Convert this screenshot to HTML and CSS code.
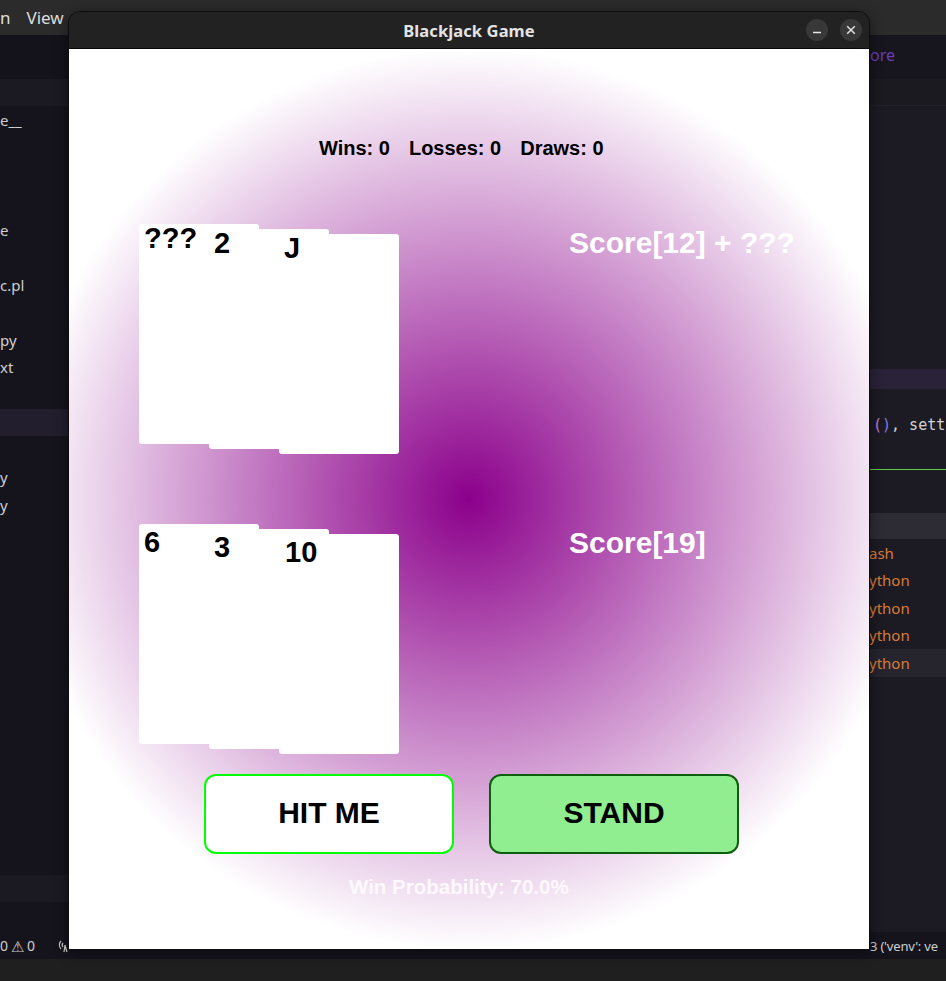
FILE: index.html
```html
<!DOCTYPE html>
<html lang="en">
<head>
<meta charset="utf-8">
<title>Blackjack Game</title>
<link rel="stylesheet" href="styles.css">
</head>
<body>
<div class="desktop">
  <div class="menubar">
    <span class="menu-item">n</span>
    <span class="menu-item">View</span>
    <span class="menu-item">Go</span>
    <span class="menu-item">Run</span>
    <span class="menu-item">Terminal</span>
    <span class="menu-item">Help</span>
  </div>

  <div class="workbench">
    <div class="sidebar">
      <div class="side-top"></div>
      <div class="side-head"></div>
      <div class="side-row">e__</div>
      <div class="side-row"></div>
      <div class="side-row"></div>
      <div class="side-row"></div>
      <div class="side-row">e</div>
      <div class="side-row"></div>
      <div class="side-row">c.pl</div>
      <div class="side-row"></div>
      <div class="side-row">py</div>
      <div class="side-row">xt</div>
      <div class="side-row"></div>
      <div class="side-row active"></div>
      <div class="side-row"></div>
      <div class="side-row">y</div>
      <div class="side-row">y</div>
      <div class="side-fill"></div>
      <div class="side-band"></div>
      <div class="side-bottom"></div>
    </div>
    <div class="editor"></div>
    <div class="panel">
      <div class="p-top"><span class="p-link">ore</span></div>
      <div class="p-head"></div>
      <div class="p-space1"></div>
      <div class="p-hl"></div>
      <div class="p-code"><span class="br1">(</span><span class="br2">)</span>, sett</div>
      <div class="p-line"></div>
      <div class="p-space2"></div>
      <div class="p-tabs"></div>
      <div class="p-term">ash</div>
      <div class="p-term">ython</div>
      <div class="p-term">ython</div>
      <div class="p-term">ython</div>
      <div class="p-term active">ython</div>
    </div>
  </div>

  <div class="statusbar">
    <div class="sb-left">
      <span>0</span>
      <span class="sb-warn">&#9888;</span>
      <span>0</span>
      <svg class="sb-icon" viewBox="0 0 14 14" width="14" height="14"><path d="M3 2 A6 6 0 0 0 3 10 M5 4 A3 3 0 0 0 5 8" fill="none" stroke="#cfcfcf" stroke-width="1.2"/><path d="M7 6 L6 13 M7 6 L9 13 M6.5 10 H8.5" fill="none" stroke="#cfcfcf" stroke-width="1.2"/></svg>
    </div>
    <div class="sb-right">3 ('venv': ve</div>
  </div>
  <div class="dock"></div>
</div>

<div class="window">
  <div class="titlebar">
    <span></span>
    <span class="title">Blackjack Game</span>
    <div class="controls">
      <span class="ctl"><svg viewBox="0 0 22 22" width="22" height="22"><path d="M7 13.5 H15" stroke="#e6e6e6" stroke-width="1.4"/></svg></span>
      <span class="ctl"><svg viewBox="0 0 22 22" width="22" height="22"><path d="M7.2 7.2 L14.8 14.8 M14.8 7.2 L7.2 14.8" stroke="#e6e6e6" stroke-width="1.4"/></svg></span>
    </div>
  </div>
  <div class="table">
    <div class="stats"><span>Wins: 0</span><span>Losses: 0</span><span>Draws: 0</span></div>

    <div class="hand dealer">
      <div class="cards">
        <div class="card">???</div>
        <div class="card">2</div>
        <div class="card">J</div>
      </div>
      <div class="score">Score[12] + ???</div>
    </div>

    <div class="hand player">
      <div class="cards">
        <div class="card">6</div>
        <div class="card">3</div>
        <div class="card">10</div>
      </div>
      <div class="score">Score[19]</div>
    </div>

    <div class="actions">
      <button class="btn hit">HIT ME</button>
      <button class="btn stand">STAND</button>
    </div>

    <div class="prob">Win Probability: 70.0%</div>
  </div>
</div>
</body>
</html>
```

FILE: styles.css
```css
* { box-sizing: border-box; }
html, body { margin: 0; padding: 0; }
body {
  width: 946px;
  height: 981px;
  overflow: hidden;
  background: #1c1b23;
  font-family: "Noto Sans", "Open Sans", sans-serif;
  position: relative;
}

/* ---------- background editor ---------- */
.desktop { display: flex; flex-direction: column; height: 981px; }

.menubar {
  flex: none;
  height: 35px;
  background: #2b2b2b;
  display: flex;
  align-items: center;
  gap: 16px;
  color: #dedede;
  font-size: 17px;
  white-space: nowrap;
  overflow: hidden;
}

.workbench { flex: none; height: 897px; display: flex; }

.sidebar {
  width: 68px;
  background: #15141c;
  display: flex;
  flex-direction: column;
  overflow: hidden;
}
.side-top { height: 44px; background: #14131b; flex: none; }
.side-head { height: 27px; background: #1b1a22; flex: none; }
.side-row {
  flex: none;
  height: 27.5px;
  display: flex;
  align-items: center;
  color: #cfcfcf;
  font-size: 15px;
  white-space: nowrap;
}
.side-row.active { background: #221e2e; }
.side-fill { flex: none; height: 356px; }
.side-band { flex: none; height: 27px; background: #1b1a22; }
.side-bottom { flex: 1; background: #15141c; }

.editor { flex: 1; background: #1c1b23; }

.panel {
  width: 77px;
  background: #1c1b23;
  display: flex;
  flex-direction: column;
  overflow: hidden;
  white-space: nowrap;
}
.p-top {
  flex: none;
  height: 44px;
  background: #17161e;
  display: flex;
  align-items: center;
  padding-bottom: 4px;
}
.p-link { color: #6b3db5; font-size: 16px; padding-left: 1px; }
.p-head { flex: none; height: 27px; background: #1b1a21; border-bottom: 1px solid #222129; }
.p-space1 { flex: none; height: 263px; }
.p-hl { flex: none; height: 20px; background: #2a2238; }
.p-code {
  flex: none;
  height: 80px;
  display: flex;
  align-items: center;
  padding: 0 0 8px 4px;
  font-family: "DejaVu Sans Mono", monospace;
  font-size: 15px;
  color: #d4d4d4;
}
.br1 { color: #c678dd; }
.br2 { color: #7d79e8; }
.p-line { flex: none; height: 1px; background: #5fc84a; }
.p-space2 { flex: none; height: 43px; }
.p-tabs { flex: none; height: 26px; background: #2d2c34; }
.p-term {
  flex: none;
  height: 27.5px;
  display: flex;
  align-items: center;
  color: #d97c3a;
  font-size: 15px;
}
.p-term.active { background: #26252e; }

.statusbar {
  flex: none;
  height: 27px;
  background: #15141d;
  display: flex;
  align-items: center;
  justify-content: space-between;
  color: #cfcfcf;
  font-size: 14px;
  white-space: nowrap;
  overflow: hidden;
}
.sb-left { display: flex; align-items: center; gap: 3px; }
.sb-warn { font-size: 15px; }
.sb-icon { margin-left: 20px; }
.sb-right { width: 77px; padding-left: 1px; font-size: 13px; letter-spacing: -0.2px; }
.dock { flex: none; height: 22px; background: #1f1f1f; }

/* ---------- game window ---------- */
.window {
  position: absolute;
  left: 68px;
  top: 11px;
  width: 802px;
  border: 1px solid #0d0d0d;
  border-radius: 12px 12px 0 0;
  background: #222222;
  overflow: hidden;
  box-shadow: 0 3px 14px rgba(0, 0, 0, 0.45);
}
.titlebar {
  height: 37px;
  display: grid;
  grid-template-columns: 1fr auto 1fr;
  align-items: center;
  background: #222222;
  border-bottom: 1px solid #080808;
}
.title {
  color: #e4e4e4;
  font-family: "Noto Sans", sans-serif;
  font-weight: 700;
  font-size: 16.5px;
  letter-spacing: 0.1px;
}
.controls {
  justify-self: end;
  display: flex;
  gap: 12px;
  padding-right: 7px;
}
.ctl {
  width: 22px;
  height: 22px;
  border-radius: 50%;
  background: #383838;
  display: block;
}
.ctl svg { display: block; }

.table {
  width: 800px;
  height: 900px;
  background: radial-gradient(circle 450px at 400px 450px, #8b008b 0%, #ffffff 100%);
  font-family: "Liberation Sans", Arial, sans-serif;
  font-weight: 700;
  display: flex;
  flex-direction: column;
  overflow: hidden;
}

.stats {
  margin-top: 89px;
  padding-left: 250px;
  display: flex;
  gap: 19px;
  font-size: 20px;
  line-height: 1;
  color: #000;
  white-space: nowrap;
}

.hand { display: flex; padding-left: 70px; }
.dealer { margin-top: 66px; }
.player { margin-top: 70px; }

.cards { display: flex; align-items: flex-start; width: 260px; flex: none; }
.card {
  flex: none;
  width: 120px;
  height: 220px;
  background: #ffffff;
  border-radius: 3px;
  font-size: 29px;
  line-height: 1;
  color: #000;
  padding-left: 5px;
  white-space: nowrap;
}
.card + .card { margin-left: -50px; }
.card:nth-child(2) { margin-top: 5px; }
.card:nth-child(3) { margin-top: 10px; }
.player .card { padding-top: 4px; }
.player .card:nth-child(3) { padding-left: 6px; }

.score {
  margin-left: 170px;
  margin-top: 4px;
  font-size: 30px;
  line-height: 1;
  color: #ffffff;
  white-space: nowrap;
}

.actions {
  margin-top: 20px;
  padding-left: 135px;
  display: flex;
  gap: 35px;
}
.btn {
  width: 250px;
  height: 80px;
  border-radius: 12px;
  border: 2px solid;
  font-family: "Liberation Sans", Arial, sans-serif;
  font-weight: 700;
  font-size: 30px;
  line-height: 1;
  color: #000;
  padding: 0 0 3px 0;
  display: flex;
  align-items: center;
  justify-content: center;
}
.hit { background: #ffffff; border-color: #00ff00; }
.stand { background: #90ee90; border-color: #0b5e0b; }

.prob {
  margin-top: 23px;
  padding-left: 280px;
  font-size: 20.5px;
  line-height: 1;
  color: #fdf9fd;
  white-space: nowrap;
}
```
